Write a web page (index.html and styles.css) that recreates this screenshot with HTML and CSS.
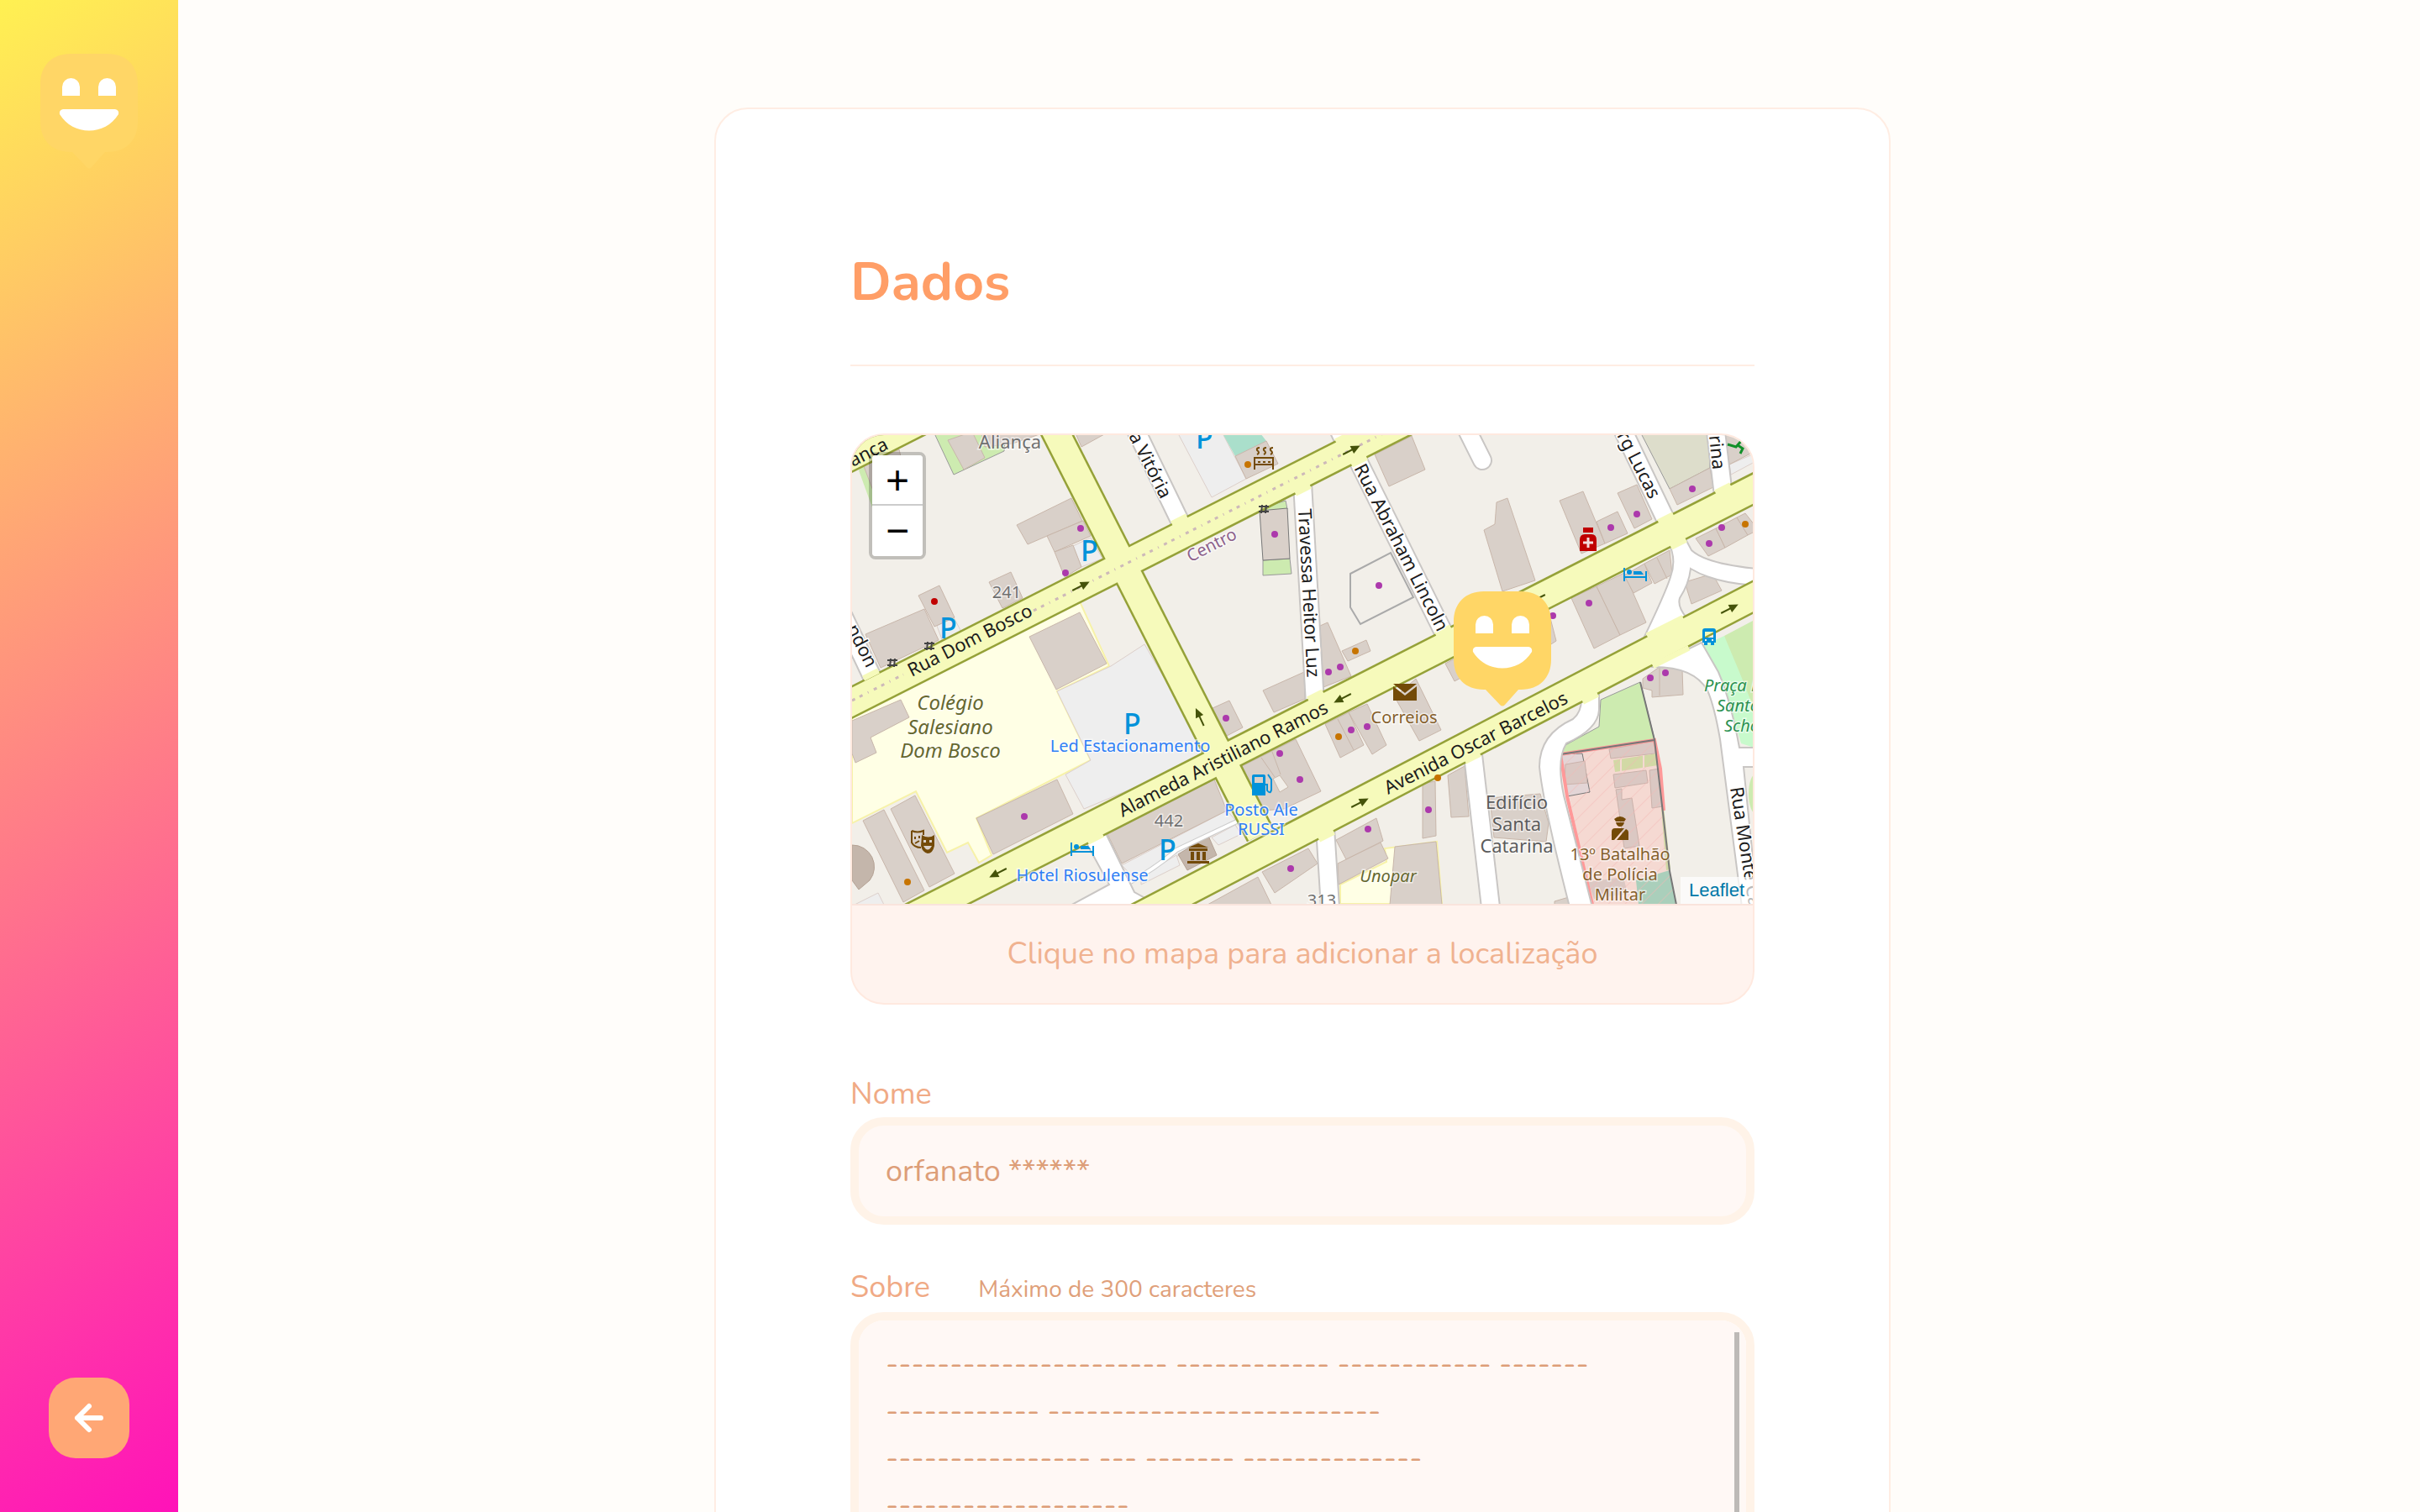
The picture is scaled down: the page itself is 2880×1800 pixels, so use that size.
FILE: index.html
```html
<!DOCTYPE html>
<html lang="pt-BR">
<head>
<meta charset="utf-8">
<meta name="viewport" content="width=device-width, initial-scale=1">
<title>Happy - Cadastro de orfanato</title>
<link rel="stylesheet" href="styles.css">
</head>
<body>
<div class="app">
  <aside class="sidebar">
    <svg class="pin" viewBox="0 0 116 137" role="img" aria-label="Happy">
      <path class="pin-body" d="M36 0H80C102 0 116 14 116 36V81C116 103 102 117 80 117H77L61 135Q58 138 55 135L38 117H36C14 117 0 103 0 81V36C0 14 14 0 36 0Z"/>
      <path class="pin-face" d="M26 50V39.500a10.500 10.500 0 0 1 21 0V50ZM69 50V39.500a10.500 10.500 0 0 1 21 0V50ZM27 66H89Q94 67 93 72C77 98 39 98 23 72Q22 67 27 66Z"/>
    </svg>
    <button class="back" type="button" aria-label="Voltar">
      <svg class="back-icon" viewBox="0 0 24 24"><path d="M19 12H5M12 19l-7-7 7-7"/></svg>
    </button>
  </aside>

  <main class="content">
    <form class="card">
      <h1 class="title">Dados</h1>

      <section class="map-box" aria-label="Mapa">
        <div class="map">
          <svg class="tiles" viewBox="1014 518 1072 558" preserveAspectRatio="xMidYMid slice">
            <defs>
              <pattern id="hatch" width="14" height="14" patternUnits="userSpaceOnUse" patternTransform="rotate(45)"><path d="M0 0V14" stroke="#f3b8b4" stroke-width="2"/></pattern>
              <g id="arrow"><path d="M-11 0H4" stroke="#45530a" stroke-width="2"/><path d="M12 0L1-5V5Z" fill="#45530a"/></g>
              <g id="bed"><path d="M1 0V16M27 4V16M1 11H27" fill="none" stroke="#0092da" stroke-width="2"/><circle cx="7" cy="5" r="3" fill="#0092da"/><path d="M12 4H21L24 8H12Z" fill="#0092da"/></g>
              <g id="gate"><path d="M-6-3H6M-6 3H6M-2-5L-3 5M3-5L2 5" stroke="#444" stroke-width="2"/></g>
            </defs>
            <rect x="1014" y="518" width="1072" height="558" fill="#f2efe9"/>

            <g class="school">
              <path d="M1014 850L1285 716L1320 793L1258 823L1298 905L1162 974L1180 1018L1165 1027L1152 1003L1127 1015L1090 942L1014 980Z"/>
              <path d="M1595 1053L1650 1026L1648 1010L1710 1002L1716 1076H1595Z"/>
            </g>
            <g class="parking">
              <path d="M1258 823L1322 793L1362 767L1440 900L1380 925L1290 963L1268 922L1298 905Z"/>
              <path d="M1277 650L1298 640L1312 665L1287 675Z"/>
              <path d="M1115 745L1135 735L1144 752L1122 764Z"/>
              <path d="M1402 516H1455L1483 570L1442 592Z"/>
              <path d="M1335 1030L1460 965L1472 978L1352 1048Z"/>
              <path d="M1358 1043L1400 1018L1404 1030L1358 1053Z"/>
              <path d="M1442 997L1470 982L1477 993L1450 1006Z"/>
              <path d="M1017 1077L1045 1063L1052 1077Z"/>
              <path d="M2058 553L2088 540V550L2060 565Z"/>
            </g>
            <g class="green">
              <path d="M1112 516H1197L1195 537L1135 565Z"/>
              <path d="M1022 560L1038 542L1050 600L1038 604Z" stroke="none"/>
              <path d="M1507 603L1530 596L1532 606L1500 609Z"/>
              <path d="M1503 667L1535 665L1537 683L1503 685Z"/>
              <path d="M1905 833L1952 812L1969 880L1858 897L1863 887L1903 865Z"/>
            </g>
            <path d="M1455 516H1500L1507 525L1470 543Z" fill="#aadfcb"/>
            <path d="M1953 516H2033L2035 557L1987 582Z" fill="#ddddcb" stroke="#999"/>
            <path d="M2024 770L2052 757L2088 800V890L2072 885L2050 810Z" fill="#c8facc"/>
            <path d="M2052 757L2088 738V845L2070 800Z" fill="#cdebb0"/>
            <ellipse cx="2090" cy="945" rx="9" ry="24" fill="#cdebb0"/>

            <g class="building">
              <path d="M1128 524L1157 514L1172 545L1147 559Z"/>
              <path d="M1168 516H1240L1205 528L1172 532Z"/>
              <path d="M1028 555L1070 535L1085 600L1045 600Z"/>
              <path d="M1280 516H1316L1287 532Z"/>
              <path d="M1210 625L1275 593L1288 620L1223 648Z"/>
              <path d="M1246 638L1289 620L1298 638L1255 657Z"/>
              <path d="M1255 657L1277 649L1287 675L1267 687Z"/>
              <path d="M1177 693L1203 681L1217 712L1193 724Z"/>
              <path d="M1093 709L1118 697L1136 735L1112 746Z"/>
              <path d="M1030 755L1100 725L1117 762L1048 795Z"/>
              <path d="M1225 758L1285 729L1317 790L1257 821Z"/>
              <path d="M1470 543L1507 525L1521 552L1483 570Z"/>
              <path d="M1636 541L1680 519L1696 559L1653 579Z"/>
              <path d="M1499 608L1532 605L1535 665L1503 667Z" stroke="#777"/>
              <path d="M1571 745L1580 741L1608 805L1575 818Z"/>
              <path d="M1597 775L1626 762L1631 775L1604 787Z"/>
              <path d="M1766 631L1779 624L1781 598L1794 593L1827 691L1788 704Z"/>
              <path d="M1856 596L1884 585L1910 647L1882 659Z"/>
              <path d="M1900 621L1925 609L1937 635L1910 647Z"/>
              <path d="M1925 587L1948 577L1966 618L1945 629Z"/>
              <path d="M1987 582L2035 557L2039 580L1996 601Z"/>
              <path d="M2053 516H2088L2083 540L2058 553Z"/>
              <path d="M2018 641L2042 629L2053 652L2033 662Z"/>
              <path d="M2042 629L2067 616L2080 637L2053 652Z"/>
              <path d="M2067 616L2077 611L2088 625V633L2080 637Z"/>
              <path d="M2005 693L2038 683L2049 703L2013 719Z"/>
              <path d="M1870 712L1900 698L1928 756L1897 772Z"/>
              <path d="M1900 698L1933 682L1959 741L1928 756Z"/>
              <path d="M1933 685L1957 671L1966 694L1944 706Z"/>
              <path d="M1957 671L1987 655L1990 684L1969 695Z"/>
              <path d="M1972 664L1984 689"/>
              <path d="M1825 740L1843 728L1852 763L1838 772Z"/>
              <path d="M1720 790L1735 782L1744 804L1731 811Z"/>
              <path d="M1014 858L1072 833L1082 854L1036 878L1043 896L1018 908L1014 897Z"/>
              <path d="M1027 977L1052 964L1100 1060L1075 1074Z"/>
              <path d="M1060 963L1089 947L1136 1040L1106 1056Z"/>
              <path d="M1162 974L1258 928L1277 969L1182 1017Z"/>
              <path d="M1318 993L1445 928L1460 965L1335 1028Z"/>
              <path d="M1437 1077L1497 1044L1513 1077Z"/>
              <path d="M1502 1038L1557 1010L1568 1028L1517 1063Z"/>
              <path d="M1590 1000L1638 974L1646 1001L1602 1023Z"/>
              <path d="M1592 1028L1643 1003L1652 1022L1593 1053Z"/>
              <path d="M1660 1008L1709 1002L1716 1077H1654Z"/>
              <path d="M1693 933L1708 930L1709 995L1693 998Z"/>
              <path d="M1723 923L1743 912L1748 972L1727 973Z"/>
              <path d="M1443 843L1463 834L1479 866L1460 876Z"/>
              <path d="M1503 822L1552 800L1553 832L1516 848Z"/>
              <path d="M1478 912L1542 880L1572 942L1528 963L1503 965Z"/>
              <path d="M1501 902L1517 925M1514 895L1524 922"/>
              <path d="M1577 862L1605 848L1623 887L1595 902Z"/>
              <path d="M1605 848L1627 838L1650 887L1633 898Z"/>
              <path d="M1592 856L1611 893"/>
              <path d="M1660 830L1685 808L1715 869L1689 882Z"/>
              <path d="M1955 808L1975 794L2002 797L2003 827L1966 830V822L1955 819Z"/>
              <path d="M1975 794V828"/>
              <path d="M1773 950L1833 945L1843 980L1840 1002L1778 997Z"/>
              <path d="M1850 1073L1867 1068L1869 1077H1850Z"/>
            </g>
            <path d="M1515 927L1523 923L1533 937L1523 943Z" fill="#f2efe9" stroke="#c9b8ab"/>
            <g fill="#c4b6ab" stroke="#b5a294">
              <path d="M1014 1006A26 26 0 0 1 1035 1048L1022 1059L1014 1048Z"/>
              <path d="M1402 1017L1438 995L1448 1018L1413 1036Z"/>
            </g>
            <path d="M1607 683L1655 658L1682 711L1619 743L1607 723Z" fill="none" stroke="#aaa" stroke-width="2"/>

            <path d="M1857 898L1969 881L1987 1037L1995 1077H1895Z" fill="#f5d9d2"/>
            <path d="M1947 1048L1987 1036L1995 1077H1950Z" fill="#aacfbb"/>
            <g fill="#dbc8c3" stroke="#cbb2ab">
              <path d="M1857 898L1883 897L1892 943L1865 948Z" fill="#e3d5d6" stroke="#777"/>
              <path d="M1863 910L1886 906L1889 932L1862 934Z"/>
              <path d="M1915 892L1969 882L1970 897L1917 903Z"/>
              <path d="M1920 922L1959 917L1961 932L1922 938Z"/>
              <path d="M1963 917L1975 915L1979 960L1966 962Z"/>
              <path d="M1923 940L1930 939V952L1942 950L1951 1007L1933 1010Z"/>
              <path d="M1890 1050L1932 1044L1937 1064L1897 1070Z" stroke="none"/>
            </g>
            <path d="M1920 905L1972 897L1973 911L1922 919ZM1977 962L1980 961L1988 1035L1983 1036Z" fill="#d2d9a5"/>
            <path d="M1929 903V918M1956 899V914" stroke="#f5d9d2" stroke-width="2"/>
            <path d="M1857 898L1969 881L1987 1037L1995 1077H1895Z" fill="url(#hatch)" opacity=".5"/>
            <path d="M1895 1077L1865 948L1857 898L1969 881L1976 915L1980 965" fill="none" stroke="#f99" stroke-width="4"/>
            <path d="M1857 898L1969 881L1987 1037L1995 1077M1952 812L1969 881" fill="none" stroke="#777" stroke-width="2"/>

            <g class="street-case">
              <path d="M1345 498L1405 622"/><path d="M1550 575L1565 838"/><path d="M1607 530L1720 757"/>
              <path d="M1583 490L1602 530"/><path d="M1740 500L1764 548" stroke-linecap="round"/>
              <path d="M1928 505L1984 622"/><path d="M2041 505L2051 590"/>
              <path d="M1752 890L1774 1080"/><path d="M1577 985L1583 1080"/>
              <path d="M1002 730L1039 808"/>
            </g>
            <g class="street">
              <path d="M1345 498L1405 622"/><path d="M1550 575L1565 838"/><path d="M1607 530L1720 757"/>
              <path d="M1583 490L1602 530"/><path d="M1740 500L1764 548" stroke-linecap="round"/>
              <path d="M1928 505L1984 622"/><path d="M2041 505L2051 590"/>
              <path d="M1752 890L1774 1080"/><path d="M1577 985L1583 1080"/>
              <path d="M1002 730L1039 808"/>
            </g>
            <path d="M1474 977L1400 1012Q1375 1034 1345 1050" fill="none" stroke="#ccc" stroke-width="6"/>
            <path d="M1474 977L1400 1012Q1375 1034 1345 1050" fill="none" stroke="#fff" stroke-width="4"/>
            <g class="junction">
              <path d="M1985 645Q1996 665 1988 687Q1982 706 1955 762L2007 735Q1996 722 1999 712Q2010 695 2012 677Q2040 694 2090 697V677Q2030 671 2013 655L2005 640Z"/>
              <path d="M1965 794Q2016 793 2032 822Q2040 840 2047 880L2073 1080H2092L2075 913H2090V890H2070Q2060 835 2045 800L2025 765Z"/>
              <path d="M1882 832Q1882 848 1872 856Q1832 874 1832 913Q1836 955 1868 1080H1895L1861 947Q1852 905 1864 885Q1902 868 1903 845V822Z"/>
              <path d="M1291 1000L1315 990L1350 1062L1366 1071L1350 1080H1270L1320 1053Z"/>
            </g>

            <g class="avenue-case">
              <path d="M1000 843L1740 468"/><path d="M1248 498L1500 994"/><path d="M990 555L1120 489"/>
              <path d="M1000 1135L2120 565"/><path d="M1300 1120L2120 693"/>
            </g>
            <g class="avenue">
              <path d="M1000 843L1740 468"/><path d="M1248 498L1500 994"/><path d="M990 555L1120 489"/>
              <path d="M1000 1135L2120 565"/><path d="M1300 1120L2120 693"/>
              <path class="mouth" d="M1402 616l3 6M1549 580l3 6M1616 546l3 6M1597 518l3 6M1564 825l3 6M1716 748l3 6M1981 614l3 6M2049 579l3 6M1996 644l3 6M1891 828l3 6M1751 899l3 6M1577 992l3 6M1302 995l3 6M1035 800l3 6"/>
              <path class="mouth wide" d="M1980 743l3 6M1987 779l3 6"/>
            </g>
            <path d="M1014 834L1075 803M1230 727L1650 514" stroke="#cdb9b9" stroke-width="3" stroke-dasharray="4 6 4 7 1 7"/>

            <use href="#arrow" transform="translate(1286 698) rotate(-27)"/>
            <use href="#arrow" transform="translate(1608 536) rotate(-27)"/>
            <use href="#arrow" transform="translate(2058 725) rotate(-27)"/>
            <use href="#arrow" transform="translate(1188 1039) rotate(153)"/>
            <use href="#arrow" transform="translate(1598 831) rotate(153)"/>
            <use href="#arrow" transform="translate(1618 956) rotate(-27)"/>
            <use href="#arrow" transform="translate(1428 854) rotate(-115)"/>
            <use href="#arrow" transform="translate(1829 713) rotate(153)"/>
            <use href="#gate" x="1504" y="606"/><use href="#gate" x="1106" y="769"/><use href="#gate" x="1062" y="789"/>

            <g fill="#ac39ac">
              <circle cx="1286" cy="629" r="4"/><circle cx="1268" cy="682" r="4"/><circle cx="1517" cy="636" r="4"/><circle cx="1641" cy="697" r="4"/><circle cx="1595" cy="794" r="4"/><circle cx="1581" cy="800" r="4"/><circle cx="1948" cy="612" r="4"/><circle cx="1917" cy="628" r="4"/><circle cx="2014" cy="582" r="4"/><circle cx="2049" cy="628" r="4"/><circle cx="2034" cy="647" r="4"/><circle cx="1891" cy="718" r="4"/><circle cx="1848" cy="733" r="4"/><circle cx="1982" cy="801" r="4"/><circle cx="1964" cy="807" r="4"/><circle cx="1219" cy="972" r="4"/><circle cx="1459" cy="855" r="4"/><circle cx="1608" cy="869" r="4"/><circle cx="1627" cy="865" r="4"/><circle cx="1523" cy="897" r="4"/><circle cx="1547" cy="928" r="4"/><circle cx="1700" cy="964" r="4"/><circle cx="1628" cy="987" r="4"/><circle cx="1536" cy="1034" r="4"/>
            </g>
            <g fill="#c77400">
              <circle cx="1485" cy="553" r="4"/><circle cx="1613" cy="775" r="4"/><circle cx="2077" cy="624" r="4"/><circle cx="1080" cy="1050" r="4"/><circle cx="1593" cy="877" r="4"/><circle cx="1711" cy="926" r="4"/>
            </g>
            <circle cx="1112" cy="716" r="4" fill="#c00000"/>

            <use href="#bed" x="1932" y="676"/><use href="#bed" x="1274" y="1003"/>
            <path d="M1884 628H1896V634H1884ZM1880 656V643Q1880 636 1886 636H1894Q1900 636 1900 643V656Z" fill="#c00000"/>
            <path d="M1890 640V652M1884 646H1896" stroke="#f2dcdc" stroke-width="3"/>
            <path fill="#0092da" fill-rule="evenodd" d="M2029 748H2039Q2042 748 2042 751V765H2040V768H2036V765H2032V768H2028V765H2026V751Q2026 748 2029 748ZM2029 752V759H2039V752ZM2029 761V763H2031V761ZM2037 761V763H2039V761Z"/>
            <path d="M1658 814H1686L1672 825ZM1658 817L1672 828L1686 817V834H1658Z" fill="#734a08"/>
            <path fill="#0092da" fill-rule="evenodd" d="M1492 922H1504Q1506 922 1506 924V947H1490V924Q1490 922 1492 922ZM1493 925V932H1503V925Z"/>
            <path d="M1506 934H1508V941Q1512 946 1513 940V928L1509 922" fill="none" stroke="#0092da" stroke-width="2"/>
            <path fill="#734a08" d="M1426 1004L1438 1009H1414ZM1415 1010H1437V1013H1415ZM1417 1014H1421V1024H1417ZM1424 1014H1428V1024H1424ZM1431 1014H1435V1024H1431ZM1413 1025H1439V1028H1413Z"/>
            <path d="M1085 989Q1092 992 1099 989V994M1085 989V1003Q1088 1009 1096 1009M1089 996V999M1094 995V998M1089 1004L1094 1001" fill="none" stroke="#734a08" stroke-width="2"/>
            <path fill="#734a08" fill-rule="evenodd" d="M1097 994Q1105 999 1112 994V1007Q1110 1016 1104 1016Q1098 1015 1096 1007ZM1099 1000V1003H1102V1000ZM1106 1000V1003H1109V1000ZM1099 1007Q1104 1016 1109 1007Z"/>
            <path d="M1493 559V545H1515V559M1493 553H1515M1497 550H1500M1503 550H1506M1509 550H1512M1496 541Q1500 539 1496 536Q1495 533 1499 533M1504 541Q1508 539 1504 536Q1503 533 1507 533M1512 541Q1516 539 1512 536Q1511 533 1515 533" fill="none" stroke="#734a08" stroke-width="2"/>
            <path fill="#734a08" d="M1921 975Q1928 969 1935 975L1933 978H1923ZM1923 979H1933Q1932 984 1928 984Q1924 984 1923 979ZM1918 1000V990Q1918 986 1922 986H1933L1921 1000ZM1935 987Q1938 988 1938 991V1000H1924Z"/>
            <path d="M2056 529L2066 532L2073 524M2068 530L2074 534L2071 540M2080 520L2072 526" fill="none" stroke="#12902a" stroke-width="3"/>

            <g class="poi-p">
              <text x="1286" y="668">P</text><text x="1118" y="760">P</text><text x="1423" y="534">P</text><text x="1337" y="874">P</text><text x="1379" y="1024">P</text>
            </g>
            <g class="road-name">
              <text class="on-avenue" transform="translate(1085 806) rotate(-27)">Rua Dom Bosco</text>
              <text class="on-avenue" transform="translate(1336 973) rotate(-27)">Alameda Aristiliano Ramos</text>
              <text class="on-avenue" transform="translate(1652 946) rotate(-27)">Avenida Oscar Barcelos</text>
              <text class="on-avenue" transform="translate(1015 556) rotate(-27)">ança</text>
              <text transform="translate(1545 606) rotate(87)">Travessa Heitor Luz</text>
              <text transform="translate(1611 557) rotate(63)">Rua Abraham Lincoln</text>
              <text transform="translate(1343 519) rotate(63)">a Vitória</text>
              <text transform="translate(1924 518) rotate(63)">rg Lucas</text>
              <text transform="translate(2034 519) rotate(84)">rina</text>
              <text transform="translate(2059 938) rotate(81)">Rua Monte Castelo</text>
              <text transform="translate(1007 748) rotate(63)">ndon</text>
            </g>
            <g class="map-label">
              <text class="number big" x="1202" y="534">Aliança</text>
              <text class="number" x="1198" y="712">241</text><text class="number" x="1391" y="984">442</text><text class="number" x="1573" y="1079">313</text>
              <text class="suburb" transform="translate(1445 655) rotate(-27)">Centro</text>
              <text class="campus big" x="1131" y="845">Colégio</text><text class="campus big" x="1131" y="874">Salesiano</text><text class="campus big" x="1131" y="902">Dom Bosco</text>
              <text class="campus" x="1652" y="1050">Unopar</text>
              <text class="service" x="1345" y="895">Led Estacionamento</text>
              <text class="service" x="1288" y="1049">Hotel Riosulense</text>
              <text class="service" x="1501" y="971">Posto Ale</text><text class="service" x="1501" y="994">RUSSI</text>
              <text class="public" x="1671" y="861">Correios</text>
              <text class="public" x="1928" y="1024">13º Batalhão</text><text class="public" x="1928" y="1048">de Polícia</text><text class="public" x="1928" y="1072">Militar</text>
              <text class="place" x="1805" y="963">Edifício</text><text class="place" x="1805" y="989">Santa</text><text class="place" x="1805" y="1015">Catarina</text>
              <text class="park" x="2028" y="823">Praça D</text><text class="park" x="2043" y="847">Santos</text><text class="park" x="2052" y="871">Schoe</text>
            </g>
          </svg>
          <div class="zoom">
            <button type="button" aria-label="Aproximar">+</button>
            <button type="button" aria-label="Afastar">−</button>
          </div>
          <svg class="pin map-pin" viewBox="0 0 116 137" role="img" aria-label="Localização escolhida">
            <path class="pin-body" d="M36 0H80C102 0 116 14 116 36V81C116 103 102 117 80 117H77L61 135Q58 138 55 135L38 117H36C14 117 0 103 0 81V36C0 14 14 0 36 0Z"/>
            <path class="pin-face" d="M26 50V39.500a10.500 10.500 0 0 1 21 0V50ZM69 50V39.500a10.500 10.500 0 0 1 21 0V50ZM27 66H89Q94 67 93 72C77 98 39 98 23 72Q22 67 27 66Z"/>
          </svg>
          <div class="attribution"><a href="https://leafletjs.com">Leaflet</a></div>
        </div>
        <p class="map-hint">Clique no mapa para adicionar a localização</p>
      </section>

      <div class="field">
        <label class="label" for="name">Nome</label>
        <input class="input" id="name" type="text" value="orfanato ******">
      </div>

      <div class="field">
        <label class="label" for="about">Sobre <span class="label-note">Máximo de 300 caracteres</span></label>
        <div class="textarea-box">
          <textarea class="input textarea" id="about" maxlength="300">---------------------- ------------ ------------ -------
------------ --------------------------
---------------- --- ------- --------------
-------------------
------------ -----------
---------------- ---
-------------------</textarea>
        </div>
      </div>
    </form>
  </main>
</div>
</body>
</html>
```
FILE: styles.css
```css
* { box-sizing: border-box; margin: 0; }
html { scrollbar-width: none; }
body {
  background: #fffdfa;
  font-family: Nunito, Lato, sans-serif;
  font-size: 36px;
}
button, input, textarea { font: inherit; }

.app { display: flex; align-items: flex-start; }

.sidebar {
  position: sticky;
  top: 0;
  flex: 0 0 212px;
  height: 100vh;
  padding: 64px 48px;
  display: flex;
  flex-direction: column;
  align-items: center;
  justify-content: space-between;
  background: linear-gradient(329.54deg, #ff12b9 0%, #fff152 100%);
}
.pin { display: block; width: 116px; height: 137px; }
.pin-body { fill: #ffd666; }
.pin-face { fill: #fff; }
.back {
  width: 96px;
  height: 96px;
  border: 0;
  border-radius: 32px;
  background: #ffa775;
  display: flex;
  align-items: center;
  justify-content: center;
  cursor: pointer;
}
.back-icon {
  width: 48px;
  height: 48px;
  fill: none;
  stroke: #fff;
  stroke-width: 3;
  stroke-linecap: round;
  stroke-linejoin: round;
}

.content { flex: 1; padding: 128px 0 128px 8px; }
.card {
  max-width: 1400px;
  margin: 0 auto;
  padding: 160px;
  background: #fff;
  border: 2px solid #ffede3;
  border-radius: 40px;
}
.title {
  padding-bottom: 52px;
  margin-bottom: 80px;
  border-bottom: 2px solid #ffede3;
  color: #ff9e67;
  font-size: 64px;
  line-height: 92px;
  font-weight: 700;
}

.map-box {
  overflow: hidden;
  border: 2px solid #ffe9df;
  border-radius: 40px;
  background: #fff3ee;
}
.map { position: relative; height: 558px; overflow: hidden; }
.tiles { display: block; width: 100%; height: 100%; font-family: "Noto Sans", sans-serif; }
.map-hint {
  height: 118px;
  border-top: 2px solid #f9e4dc;
  color: #f0b290;
  line-height: 116px;
  text-align: center;
}
.zoom {
  position: absolute;
  left: 20px;
  top: 20px;
  display: flex;
  flex-direction: column;
  border: 4px solid rgba(0, 0, 0, .2);
  border-radius: 8px;
  background-clip: padding-box;
}
.zoom button {
  width: 60px;
  height: 60px;
  padding: 0;
  border: 0;
  background: #fff;
  color: #000;
  font: 48px/60px "Liberation Sans", sans-serif;
  cursor: pointer;
}
.zoom button:first-child { border-bottom: 2px solid #ccc; border-radius: 4px 4px 0 0; }
.zoom button:last-child { border-radius: 0 0 4px 4px; }
.map-pin { position: absolute; left: 716px; top: 186px; }
.attribution {
  position: absolute;
  right: 0;
  bottom: 0;
  padding: 0 10px;
  background: rgba(255, 255, 255, .7);
  font: 22px/32px "Liberation Sans", sans-serif;
}
.attribution a { color: #0078a8; text-decoration: none; }

.school { fill: #ffffe5; stroke: #f7f2a8; stroke-width: 2; }
.parking { fill: #eee; stroke: #dccfca; stroke-width: 1; }
.green { fill: #cdebb0; stroke: #999; stroke-width: 1; }
.building { fill: #d9d0c9; stroke: #c8b6aa; stroke-width: 1; }
.street-case { fill: none; stroke: #c9c6c4; stroke-width: 24; }
.street { fill: none; stroke: #fff; stroke-width: 20; }
.junction { fill: #fff; stroke: #c9c6c4; stroke-width: 2; }
.avenue-case { fill: none; stroke: #95a138; stroke-width: 36; }
.avenue { fill: none; stroke: #f6fabb; stroke-width: 31; }
.avenue .mouth { stroke-width: 20; }
.avenue .wide { stroke-width: 48; }
.road-name { font-size: 22px; fill: #1c1c1c; }
.road-name text { stroke: #fff; stroke-width: 3px; paint-order: stroke; }
.road-name .on-avenue { stroke: #f6fabb; }
.map-label { font-size: 20px; text-anchor: middle; }
.map-label text { stroke: rgba(255, 255, 255, .6); stroke-width: 3px; paint-order: stroke; }
.number { fill: #707070; }
.suburb { fill: #8d618b; }
.campus { fill: #666830; font-style: italic; }
.map-label .big { font-size: 22px; }
.map-label .campus.big { font-size: 24px; }
.service { fill: #2f7ff5; }
.public { fill: #85602c; }
.place { fill: #5c5c5c; font-size: 22px; }
.park { fill: #2b9150; font-style: italic; text-anchor: start; }
.poi-p { fill: #0092da; font-size: 34px; font-weight: 500; }

.field { display: flex; flex-direction: column; margin-top: 48px; }
.map-box + .field { margin-top: 80px; }
.label { color: #f0aa85; line-height: 54px; }
.label-note { margin-left: 48px; color: #dfa07a; font-size: 28px; }
.input {
  display: block;
  width: 100%;
  height: 128px;
  padding: 0 32px;
  border: 10px solid #fff3e8;
  border-radius: 40px;
  outline: 0;
  background: #fff8f5;
  color: #dd9e78;
}
.textarea-box { position: relative; }
.textarea {
  height: 400px;
  padding: 24px 32px;
  line-height: 56px;
  resize: none;
  overflow-y: auto;
  scrollbar-width: none;
}
/* scroll thumb of the text area */
.textarea-box::after {
  content: "";
  position: absolute;
  top: 24px;
  right: 18px;
  width: 6px;
  height: 280px;
  background: #bdbab7;
}
```
